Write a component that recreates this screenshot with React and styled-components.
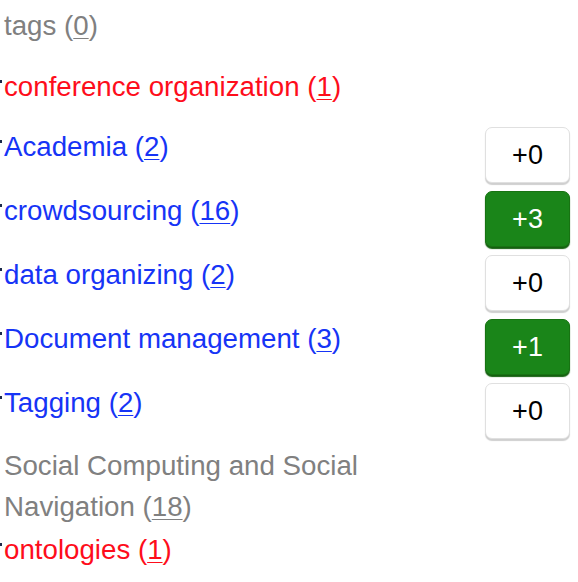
import styled, { createGlobalStyle } from "styled-components";

const GlobalStyle = createGlobalStyle`
  body {
    margin: 0;
    background: #fff;
    font-family: "Liberation Sans", Arial, sans-serif;
  }
`;

const tags = [
  { name: "tags", count: 0, tone: "muted", gap: 20 },
  { name: "conference organization", count: 1, tone: "warn", mark: true, gap: 20 },
  { name: "Academia", count: 2, tone: "link", mark: true, vote: 0, gap: 8 },
  { name: "crowdsourcing", count: 16, tone: "link", mark: true, vote: 3, gap: 8 },
  { name: "data organizing", count: 2, tone: "link", mark: true, vote: 0, gap: 8 },
  { name: "Document management", count: 3, tone: "link", mark: true, vote: 1, gap: 8 },
  { name: "Tagging", count: 2, tone: "link", mark: true, vote: 0, gap: 7 },
  { name: "Social Computing and Social Navigation", count: 18, tone: "muted", gap: 3 },
  { name: "ontologies", count: 1, tone: "warn", mark: true, gap: 0 },
];

const colors = {
  muted: "#808080",
  warn: "#fe0d1b",
  link: "#1634f6",
};

const App = () => {
  return (
    <>
      <GlobalStyle />
      <TagList>
        {tags.map((tag) => (
          <Row key={tag.name} $gap={tag.gap}>
            {tag.mark && <Mark />}
            <Label $tone={tag.tone}>
              {tag.name} (<Count>{tag.count}</Count>)
            </Label>
            {tag.vote !== undefined && (
              <Vote $active={tag.vote > 0}>+{tag.vote}</Vote>
            )}
          </Row>
        ))}
      </TagList>
    </>
  );
};

const TagList = styled.ul`
  list-style: none;
  margin: 0;
  padding: 6px 8px 0 0;
  display: flex;
  flex-direction: column;
`;

const Row = styled.li`
  position: relative;
  display: flex;
  align-items: flex-start;
  justify-content: space-between;
  gap: 16px;
  margin-bottom: ${(p) => p.$gap}px;
`;

const Mark = styled.span`
  position: absolute;
  left: 0;
  top: 13px;
  width: 2px;
  height: 3px;
  background: #1c2a4a;
`;

const Label = styled.span`
  padding-left: 4px;
  max-width: 372px;
  font-size: 27.7px;
  line-height: 40.5px;
  color: ${(p) => colors[p.$tone]};
`;

const Count = styled.span`
  text-decoration: underline;
  text-underline-offset: 3px;
  text-decoration-thickness: 1px;
`;

const Vote = styled.button`
  flex: none;
  width: 85px;
  height: 56px;
  margin-top: 0;
  border-radius: 7px;
  font-family: "Liberation Sans", Arial, sans-serif;
  font-size: 27px;
  padding: 0;
  border: 1px solid ${(p) => (p.$active ? "#177312" : "#e0e0e0")};
  background: ${(p) => (p.$active ? "#1a8519" : "#fff")};
  color: ${(p) => (p.$active ? "#fff" : "#000")};
  box-shadow: 0 2px 1px ${(p) => (p.$active ? "#14600f" : "#cfcfcf")};
`;

export default App;
